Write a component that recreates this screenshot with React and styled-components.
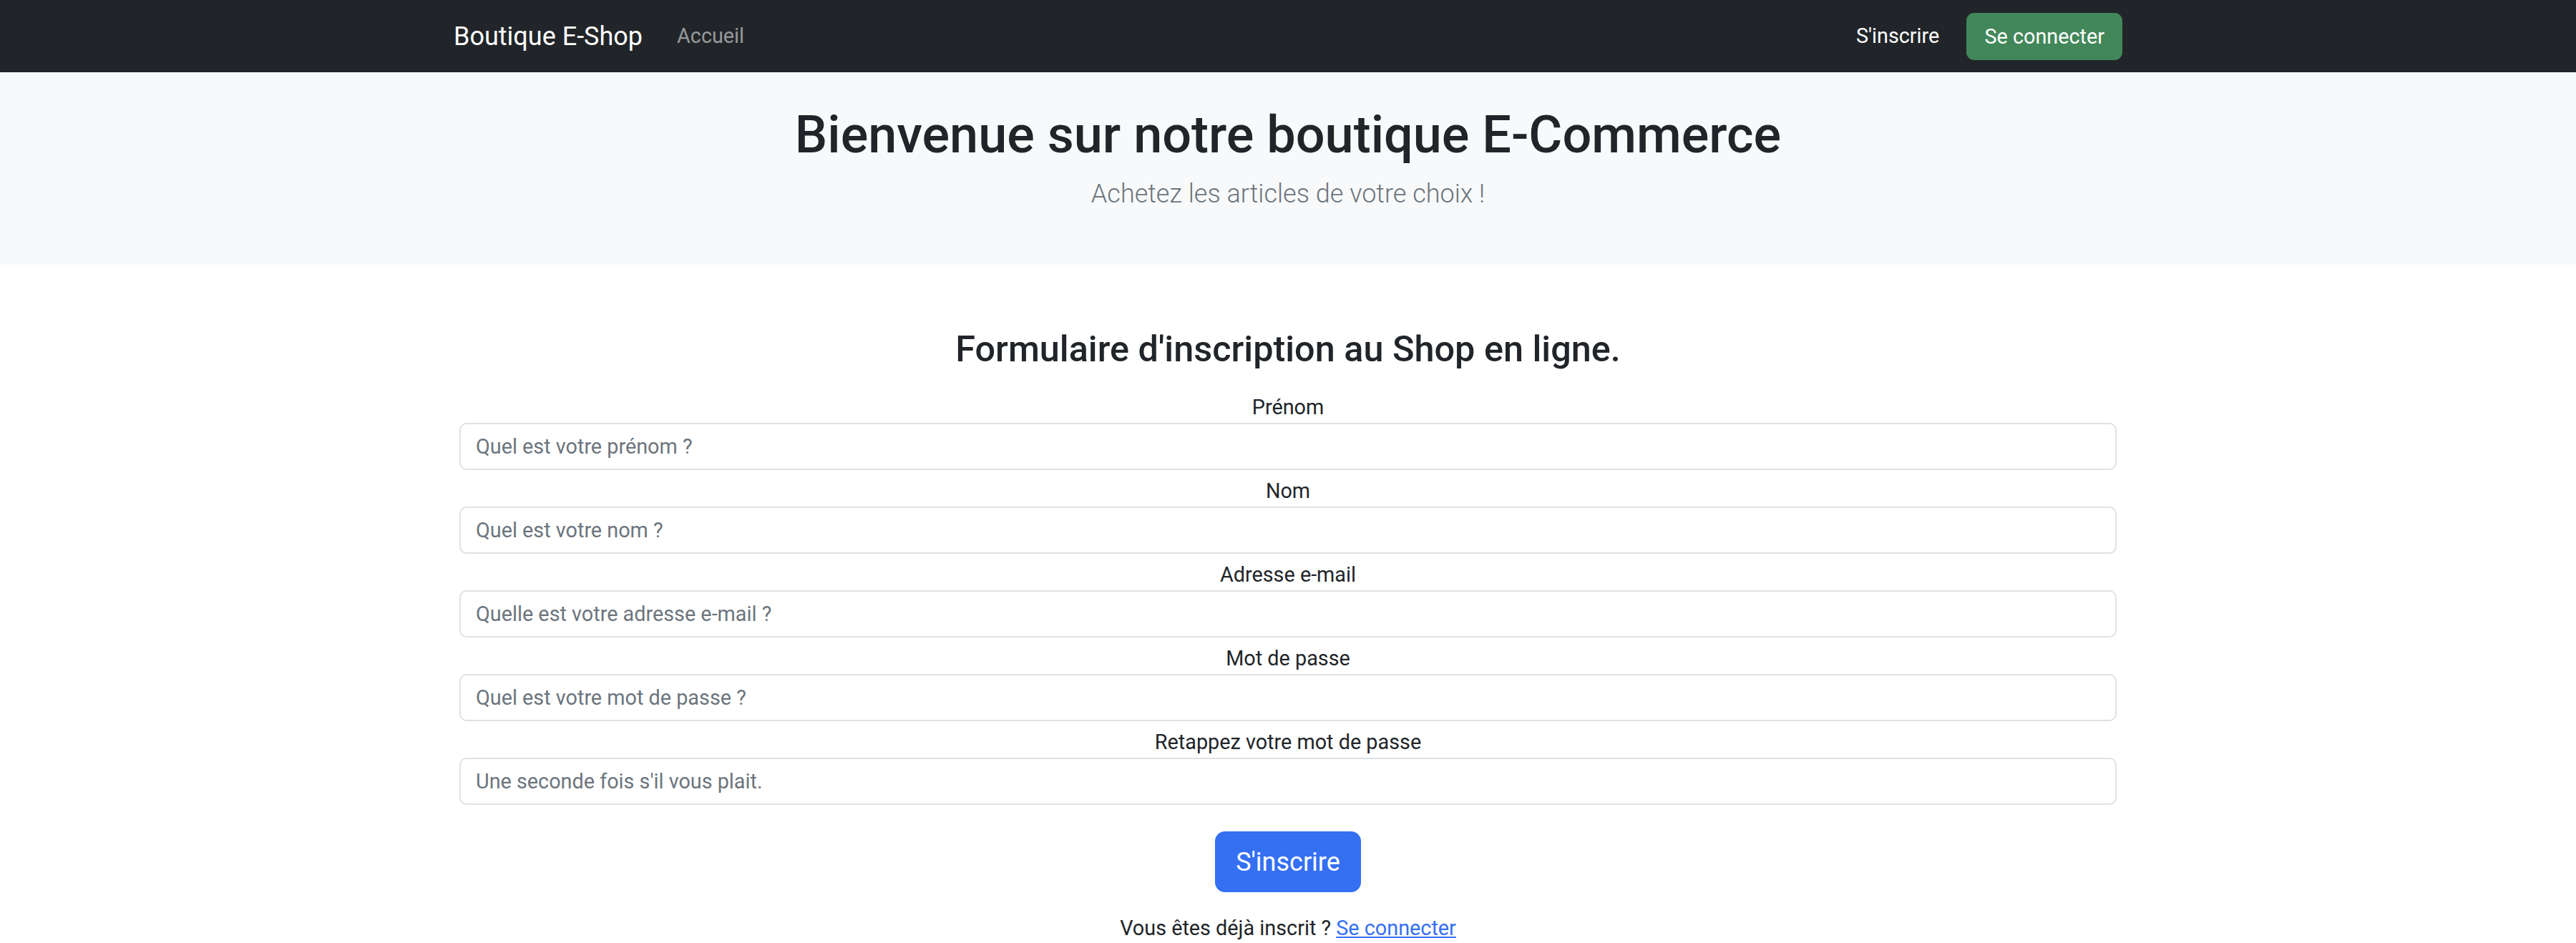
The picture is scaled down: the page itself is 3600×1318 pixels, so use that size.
import React from 'react';
import styled, { createGlobalStyle } from 'styled-components';

const GlobalStyle = createGlobalStyle`
    * {
        box-sizing: border-box;
    }
    body {
        margin: 0;
        background: #ffffff;
        color: #212529;
        font-family: Roboto, "Noto Sans", "Liberation Sans", sans-serif;
    }
`;

const fields = [
    { id: 'firstname', label: 'Prénom', type: 'text', placeholder: 'Quel est votre prénom ?' },
    { id: 'lastname', label: 'Nom', type: 'text', placeholder: 'Quel est votre nom ?' },
    { id: 'email', label: 'Adresse e-mail', type: 'email', placeholder: 'Quelle est votre adresse e-mail ?' },
    { id: 'password', label: 'Mot de passe', type: 'password', placeholder: 'Quel est votre mot de passe ?' },
    { id: 'confirm', label: 'Retappez votre mot de passe', type: 'password', placeholder: "Une seconde fois s'il vous plait." },
];

const App = () => {
    return (
        <Page>
            <GlobalStyle />
            <Navbar>
                <NavContainer>
                    <NavGroup>
                        <Brand href="#">Boutique E-Shop</Brand>
                        <NavLink href="#" $muted>Accueil</NavLink>
                    </NavGroup>
                    <NavGroup>
                        <NavLink href="#">S'inscrire</NavLink>
                        <NavButton type="button">Se connecter</NavButton>
                    </NavGroup>
                </NavContainer>
            </Navbar>

            <Hero>
                <HeroTitle>Bienvenue sur notre boutique E-Commerce</HeroTitle>
                <HeroLead>Achetez les articles de votre choix !</HeroLead>
            </Hero>

            <Main>
                <FormTitle>Formulaire d'inscription au Shop en ligne.</FormTitle>
                <Form onSubmit={(e) => e.preventDefault()}>
                    {fields.map((field) => (
                        <Field key={field.id}>
                            <Label htmlFor={field.id}>{field.label}</Label>
                            <Input id={field.id} type={field.type} placeholder={field.placeholder} />
                        </Field>
                    ))}
                    <SubmitButton type="submit">S'inscrire</SubmitButton>
                </Form>
                <FooterText>
                    Vous êtes déjà inscrit ? <TextLink href="#">Se connecter</TextLink>
                </FooterText>
            </Main>
        </Page>
    );
};

const Page = styled.div`
    min-height: 1318px;
`;

const Navbar = styled.nav`
    height: 101px;
    background-color: #212529;
    display: flex;
    justify-content: center;
`;

const NavContainer = styled.div`
    width: 2332px;
    display: flex;
    align-items: center;
    justify-content: space-between;
`;

const NavGroup = styled.div`
    display: flex;
    align-items: center;
`;

const Brand = styled.a`
    font-size: 36px;
    line-height: 54px;
    color: #ffffff;
    text-decoration: none;
    margin-right: 34px;
`;

const NavLink = styled.a`
    font-size: 28.8px;
    line-height: 43px;
    padding: 0 14px;
    text-decoration: none;
    color: ${({ $muted }) => ($muted ? 'rgba(255, 255, 255, 0.55)' : '#ffffff')};
    margin-right: ${({ $muted }) => ($muted ? '0' : '24px')};
`;

const NavButton = styled.button`
    height: 66px;
    padding: 0 25px;
    border: none;
    border-radius: 11px;
    background-color: #42875a;
    color: #ffffff;
    font-family: inherit;
    font-size: 28.8px;
    cursor: pointer;
`;

const Hero = styled.header`
    background-color: #f8f9fa;
    padding: 45px 0 43px;
    text-align: center;
`;

const HeroTitle = styled.h1`
    margin: 0 0 12px;
    font-size: 72px;
    font-weight: 500;
    line-height: 86px;
    color: #212529;
`;

const HeroLead = styled.p`
    margin: 0 0 29px;
    font-size: 36px;
    font-weight: 300;
    line-height: 54px;
    color: #6c757d;
`;

const Main = styled.main`
    display: flex;
    flex-direction: column;
    align-items: center;
    padding-top: 88px;
`;

const FormTitle = styled.h3`
    margin: 0 0 30px;
    font-size: 50.4px;
    font-weight: 500;
    line-height: 60px;
`;

const Form = styled.form`
    width: 2316px;
    display: flex;
    flex-direction: column;
    align-items: center;
`;

const Field = styled.div`
    width: 100%;
    display: flex;
    flex-direction: column;
    margin-bottom: 8px;
`;

const Label = styled.label`
    text-align: center;
    font-size: 28.8px;
    line-height: 43px;
    color: #212529;
`;

const Input = styled.input`
    width: 100%;
    height: 66px;
    padding: 0 21px;
    border: 2px solid #dee2e6;
    border-radius: 10px;
    background: #ffffff;
    font-family: inherit;
    font-size: 28.8px;
    color: #212529;

    &::placeholder {
        color: #6c757d;
    }
`;

const SubmitButton = styled.button`
    margin-top: 29px;
    height: 85px;
    padding: 0 29px;
    border: none;
    border-radius: 14px;
    background-color: #3570f3;
    color: #ffffff;
    font-family: inherit;
    font-size: 36px;
    cursor: pointer;
`;

const FooterText = styled.p`
    margin: 29px 0 0;
    font-size: 28.8px;
    line-height: 43px;
    color: #212529;
`;

const TextLink = styled.a`
    color: #3570f3;
    text-decoration: underline;
`;

export default App;
